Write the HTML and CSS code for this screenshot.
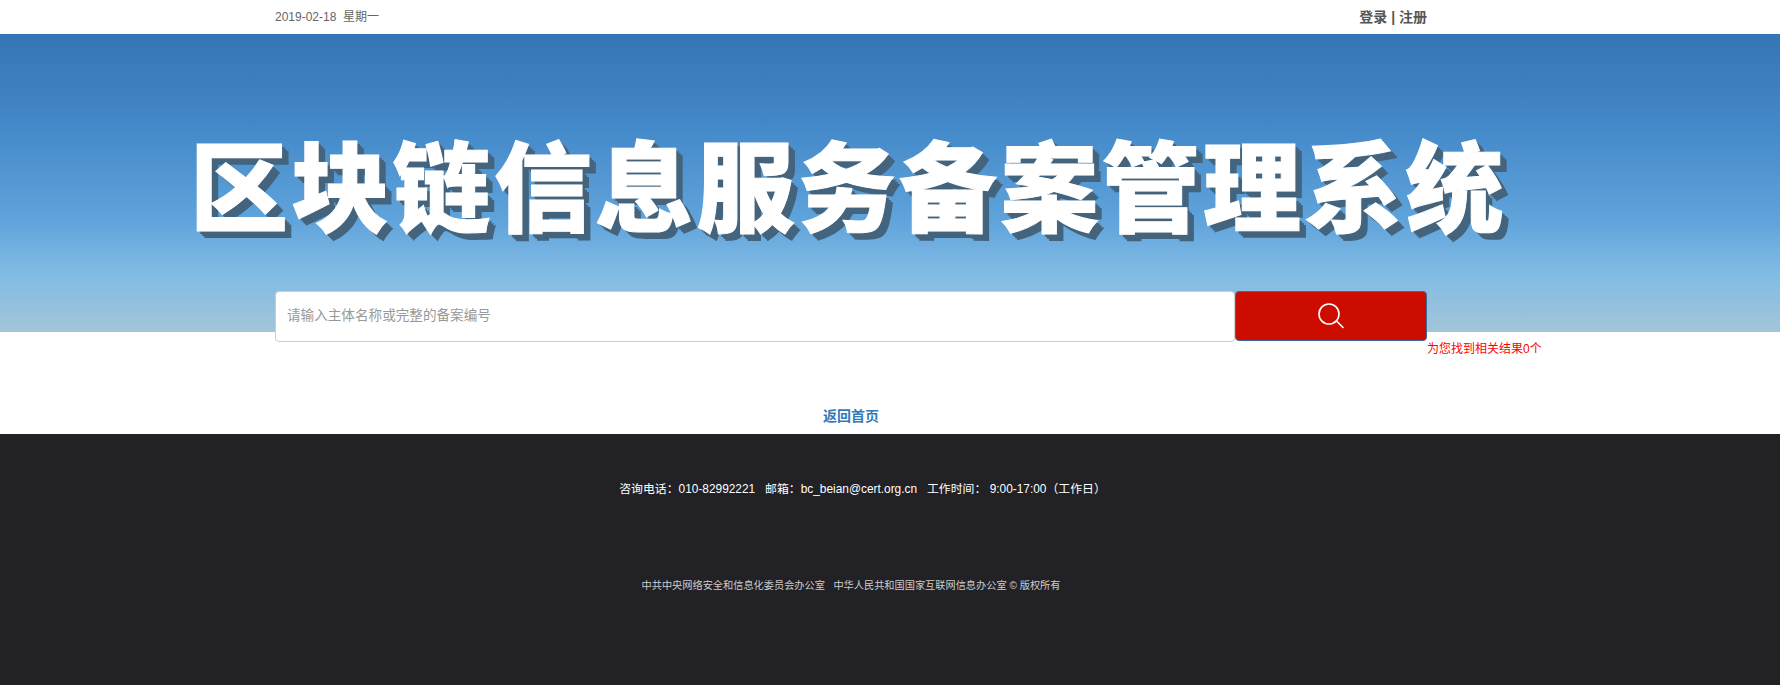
FILE: index.html
```html
<!DOCTYPE html>
<html lang="zh-CN">
<head>
  <meta charset="UTF-8" />
  <title>区块链信息服务备案管理系统</title>
  <link rel="stylesheet" href="styles.css">
</head>
<body>
  <div class="top-bar">
    <div class="wrap top-inner">
      <span class="date">2019-02-18&nbsp; 星期一</span>
      <span class="user-links"><a href="#">登录</a> | <a href="#">注册</a></span>
    </div>
  </div>

  <div class="banner">
    <h1 class="banner-title">区块链信息服务备案管理系统</h1>
    <div class="wrap search-row">
      <input class="search-input" type="text" placeholder="请输入主体名称或完整的备案编号" />
      <button class="search-btn" aria-label="搜索">
        <svg width="28" height="28" viewBox="0 0 28 28" fill="none" stroke="#fff" stroke-width="1.6">
          <circle cx="12" cy="12" r="10" />
          <path d="M19.5 19 L26 25.5" stroke-linecap="round" />
        </svg>
      </button>
    </div>
  </div>

  <div class="wrap result-count">为您找到相关结果0个</div>

  <div class="back-link">
    <a href="#">返回首页</a>
  </div>

  <div class="footer">
    <p class="contact">咨询电话：010-82992221 &nbsp; 邮箱：bc_beian@cert.org.cn &nbsp; 工作时间： 9:00-17:00（工作日）</p>
    <p class="copyright">中共中央网络安全和信息化委员会办公室 &nbsp; 中华人民共和国国家互联网信息办公室 © 版权所有</p>
  </div>
</body>
</html>
```

FILE: styles.css
```css
* {
  box-sizing: border-box;
}

html, body {
  margin: 0;
  padding: 0;
}

body {
  font-family: "Liberation Sans", "Noto Sans CJK SC", sans-serif;
  font-size: 12px;
  background: #fff;
  height: 685px;
  overflow: hidden;
}

.wrap {
  width: 1152px;
  margin-left: 275px;
}

.top-bar {
  height: 34px;
  background: #fff;
}

.top-inner {
  display: flex;
  justify-content: space-between;
  align-items: center;
  height: 34px;
  padding-bottom: 3px;
}

.date {
  color: #666;
  font-size: 12px;
}

.user-links {
  color: #555;
  font-size: 14px;
  font-weight: bold;
}

.user-links a {
  color: #555;
  text-decoration: none;
}

.banner {
  height: 298px;
  padding-top: 91px;
  background: linear-gradient(to bottom, #3575b5 0%, #4388c8 30%, #5fa3db 62%, #80bbe4 80%, #a3c5d9 100%);
}

.banner-title {
  margin: 0 0 0 190px;
  height: 166px;
  font-family: "Noto Sans CJK SC", sans-serif;
  font-size: 98px;
  font-weight: 900;
  line-height: 112px;
  letter-spacing: 3.3px;
  color: #fff;
  white-space: nowrap;
  -webkit-text-stroke: 1px #fff;
  text-shadow: 3px 3px 0 #44647e, 5px 5px 0 #44647e, 7px 7px 0 #44647e;
}

.search-row {
  display: flex;
  height: 51px;
}

.search-input {
  flex: 1;
  height: 51px;
  padding: 0 11px 3px;
  border: 1px solid #ccc;
  border-radius: 4px;
  background: #fff;
  font-family: inherit;
  font-size: 13.6px;
}

.search-input::placeholder {
  color: #999;
}

.search-btn {
  display: flex;
  align-items: center;
  justify-content: center;
  width: 192px;
  height: 50px;
  background: #cd0c00;
  border: 1px solid #3f6a9c;
  border-radius: 4px;
  cursor: pointer;
}

.result-count {
  margin-left: 1427px;
  width: auto;
  padding-top: 9px;
  color: #f00;
  line-height: 17px;
}

.back-link {
  margin-top: 48px;
  padding-right: 78px;
  text-align: center;
  font-size: 14px;
  font-weight: bold;
  line-height: 20px;
}

.back-link a {
  color: #337ab7;
  text-decoration: none;
}

.footer {
  height: 260px;
  margin-top: 8px;
  background: #212126;
  text-align: center;
  overflow: hidden;
}

.contact {
  margin: 47px 0 0;
  padding-right: 55px;
  color: #fff;
  font-size: 11.88px;
  line-height: 17px;
}

.copyright {
  margin: 80px 0 0;
  padding-right: 78px;
  color: #ccc;
  font-size: 10.2px;
  line-height: 15px;
}
```
